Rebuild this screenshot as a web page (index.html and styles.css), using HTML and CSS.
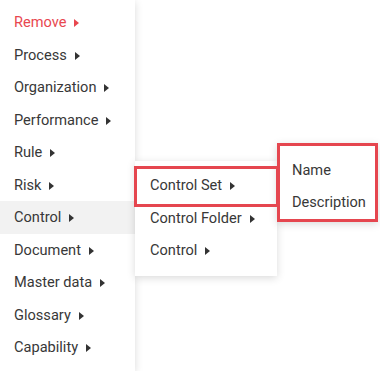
FILE: index.html
```html
<!DOCTYPE html>
<html lang="en">
<head>
	<meta charset="UTF-8">
	<title>Menu</title>
	<link rel="stylesheet" href="styles.css">
</head>
<body>
	<ul class="menu">
		<li class="item danger">Remove<i class="caret"></i></li>
		<li class="item">Process<i class="caret"></i></li>
		<li class="item">Organization<i class="caret"></i></li>
		<li class="item">Performance<i class="caret"></i></li>
		<li class="item">Rule<i class="caret"></i></li>
		<li class="item">Risk<i class="caret"></i></li>
		<li class="item open">Control<i class="caret"></i>
			<ul class="menu sub">
				<li class="item marked">Control Set<i class="caret"></i>
					<ul class="menu sub leaf">
						<li class="item">Name</li>
						<li class="item">Description</li>
					</ul>
				</li>
				<li class="item">Control Folder<i class="caret"></i></li>
				<li class="item">Control<i class="caret"></i></li>
			</ul>
		</li>
		<li class="item">Document<i class="caret"></i></li>
		<li class="item">Master data<i class="caret"></i></li>
		<li class="item">Glossary<i class="caret"></i></li>
		<li class="item">Capability<i class="caret"></i></li>
	</ul>
</body>
</html>
```

FILE: styles.css
```css
*{
	margin: 0;
	padding: 0;
	box-sizing: border-box;
}
body{
	background: #fff;
	font-family: Roboto, "Liberation Sans", sans-serif;
	font-size: 14.6px;
	color: #383838;
}
ul{
	list-style: none;
}
.menu{
	width: 135px;
	padding: 6px 0 7px;
	background: #fff;
	box-shadow: 0 2px 8px rgba(0,0,0,.15);
}
.item{
	position: relative;
	height: 32.5px;
	line-height: 32.5px;
	padding-left: 14px;
	white-space: nowrap;
	background: #fff;
}
.caret{
	display: inline-block;
	width: 0;
	height: 0;
	margin-left: 8px;
	vertical-align: 0;
	border-left: 5px solid #333;
	border-top: 4px solid transparent;
	border-bottom: 4px solid transparent;
}
.danger{
	color: #e8474f;
}
.danger .caret{
	border-left-color: #e8474f;
}
.open{
	background: #f2f2f2;
}
.sub{
	position: absolute;
	left: 100%;
	top: -40px;
	width: 142px;
	padding: 8px 0 9px;
	z-index: 2;
}
.sub .item{
	padding-left: 15px;
}
.marked:after{
	content: "";
	position: absolute;
	left: -1px;
	top: -3px;
	width: 139px;
	height: 35px;
	border: 3px solid #e5464f;
	z-index: 4;
}
.leaf{
	top: -26px;
	width: 101px;
	padding: 8px 0 1px;
	border: 3px solid #e5464f;
	z-index: 3;
}
.leaf .item{
	height: 32px;
	line-height: 32px;
	padding-left: 12px;
}
```
